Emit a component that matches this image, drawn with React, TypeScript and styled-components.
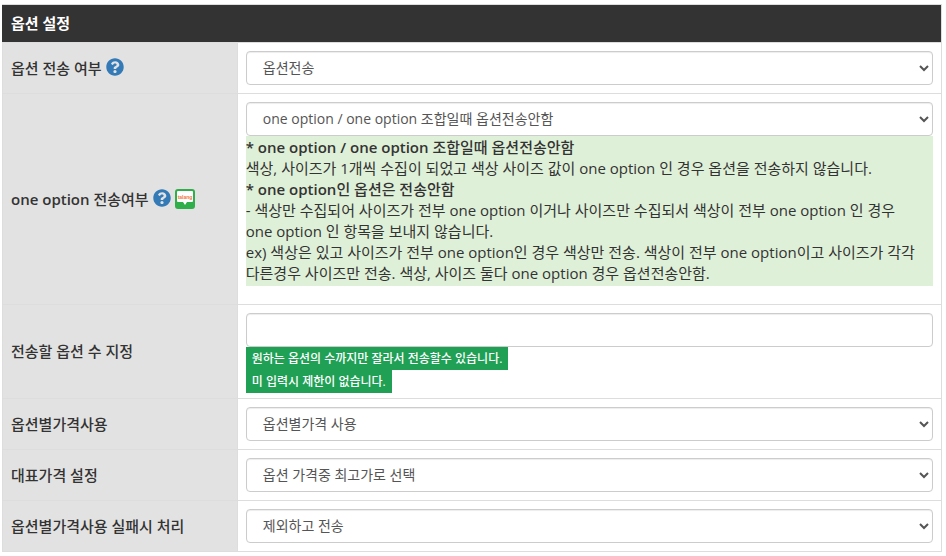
import React from "react";
import styled, { createGlobalStyle } from "styled-components";
import { FaQuestionCircle } from "react-icons/fa";

const GlobalStyle = createGlobalStyle`
  * {
    box-sizing: border-box;
  }
  body {
    margin: 0;
    padding: 4px 4px 4px 2px;
    background: #fff;
    color: #333;
    font-family: "Open Sans", "Noto Sans CJK KR", sans-serif;
    font-size: 15px;
    font-weight: 400;
    line-height: 21px;
    word-break: keep-all;
  }
`;

const SettingsTable = styled.table`
  width: 100%;
  table-layout: fixed;
  border-collapse: collapse;
  border: 1px solid #ddd;
`;

const LabelColumn = styled.col`
  width: 25%;
`;

const HeaderCell = styled.th`
  padding: 8px;
  border: 1px solid #ddd;
  border-left-color: #333;
  background: #333;
  color: #fff;
  font-weight: 700;
  text-align: left;
`;

const LabelCell = styled.th`
  padding: 8px;
  border: 1px solid #ddd;
  background: #e2e2e2;
  font-weight: 550;
  text-align: left;
  vertical-align: middle;
`;

const LabelContent = styled.div`
  display: flex;
  align-items: center;
  gap: 4px;
`;

const ControlCell = styled.td<{ $bottom?: number }>`
  padding: 8px 8px ${(p) => p.$bottom ?? 8}px;
  border: 1px solid #ddd;
`;

const IconButton = styled.button`
  display: flex;
  padding: 0 0 3px;
  border: 0;
  background: none;
  color: #337ab7;
  cursor: pointer;
`;

const Select = styled.select`
  display: block;
  width: 100%;
  height: 34px;
  padding: 5px 12px 7px;
  border: 1px solid #ccc;
  border-radius: 4px;
  background: #fff;
  box-shadow: inset 0 1px 1px rgba(0, 0, 0, 0.075);
  color: #555;
  font: inherit;
  font-size: 14px;
  line-height: 20px;
`;

const TextInput = styled.input`
  display: block;
  width: 100%;
  height: 34px;
  padding: 6px 12px;
  border: 1px solid #ccc;
  border-radius: 4px;
  box-shadow: inset 0 1px 1px rgba(0, 0, 0, 0.075);
  color: #555;
  font: inherit;
`;

const HelpText = styled.p`
  margin: 0 0 10px;
  padding: 1px 0 2px;
  background: #dff0d8;

  strong {
    font-weight: 550;
  }
`;

const Term = styled.span`
  white-space: nowrap;
`;

const NoteList = styled.div`
  display: flex;
  flex-direction: column;
  align-items: flex-start;
`;

const Note = styled.span`
  padding: 0 6px;
  background: #1fa055;
  color: #fff;
  font-size: 12px;
  font-weight: 500;
  line-height: 23px;
`;

function HelpButton({ label }: { label: string }) {
  return (
    <IconButton type="button" aria-label={label}>
      <FaQuestionCircle size={18} />
    </IconButton>
  );
}

function TalkIcon() {
  return (
    <svg width="20" height="20" viewBox="0 0 20 20" aria-hidden="true">
      <rect width="20" height="20" rx="3" fill="#2fae49" />
      <path d="M3 2h14a1 1 0 0 1 1 1v9a1 1 0 0 1-1 1h-5l-2 3-2-3H3a1 1 0 0 1-1-1V3a1 1 0 0 1 1-1z" fill="#fff" />
      <text x="10" y="10" textAnchor="middle" fontFamily="Liberation Sans, sans-serif" fontSize="5" fontWeight="700" fill="#f37440">
        talang
      </text>
    </svg>
  );
}

interface SelectRowProps {
  id: string;
  label: string;
  option: string;
  icons?: React.ReactNode;
  children?: React.ReactNode;
}

function SelectRow({ id, label, option, icons, children }: SelectRowProps) {
  return (
    <tr>
      <LabelCell scope="row">
        <LabelContent>
          <label htmlFor={id}>{label}</label>
          {icons}
        </LabelContent>
      </LabelCell>
      <ControlCell>
        <Select id={id}>
          <option>{option}</option>
        </Select>
        {children}
      </ControlCell>
    </tr>
  );
}

export default function App() {
  return (
    <>
      <GlobalStyle />
      <SettingsTable>
        <colgroup>
          <LabelColumn />
          <col />
        </colgroup>
        <thead>
          <tr>
            <HeaderCell colSpan={2}>옵션 설정</HeaderCell>
          </tr>
        </thead>
        <tbody>
          <SelectRow
            id="send-option"
            label="옵션 전송 여부"
            option="옵션전송"
            icons={<HelpButton label="옵션 전송 여부 도움말" />}
          />
          <SelectRow
            id="one-option"
            label="one option 전송여부"
            option="one option / one option 조합일때 옵션전송안함"
            icons={
              <>
                <HelpButton label="one option 전송여부 도움말" />
                <TalkIcon />
              </>
            }
          >
            <HelpText>
              <strong>* one option / one option 조합일때 옵션전송안함</strong>
              <br />
              색상, 사이즈가 1개씩 수집이 되었고 색상 사이즈 값이 one option 인 경우 옵션을 전송하지 않습니다.
              <br />
              <strong>* one option인 옵션은 전송안함</strong>
              <br />
              - 색상만 수집되어 사이즈가 전부 one option 이거나 사이즈만 수집되서 색상이 전부 one option 인 경우 <Term>one option</Term> 인 항목을 보내지 않습니다.
              <br />
              ex) 색상은 있고 사이즈가 전부 one option인 경우 색상만 전송. 색상이 전부 one option이고 사이즈가 각각 다른경우 사이즈만 전송. 색상, 사이즈 둘다 one option 경우 옵션전송안함.
            </HelpText>
          </SelectRow>
          <tr>
            <LabelCell scope="row">
              <label htmlFor="option-count">전송할 옵션 수 지정</label>
            </LabelCell>
            <ControlCell $bottom={5}>
              <TextInput id="option-count" type="text" />
              <NoteList>
                <Note>원하는 옵션의 수까지만 잘라서 전송할수 있습니다.</Note>
                <Note>미 입력시 제한이 없습니다.</Note>
              </NoteList>
            </ControlCell>
          </tr>
          <SelectRow id="option-price" label="옵션별가격사용" option="옵션별가격 사용" />
          <SelectRow id="main-price" label="대표가격 설정" option="옵션 가격중 최고가로 선택" />
          <SelectRow id="price-failure" label="옵션별가격사용 실패시 처리" option="제외하고 전송" />
        </tbody>
      </SettingsTable>
    </>
  );
}
